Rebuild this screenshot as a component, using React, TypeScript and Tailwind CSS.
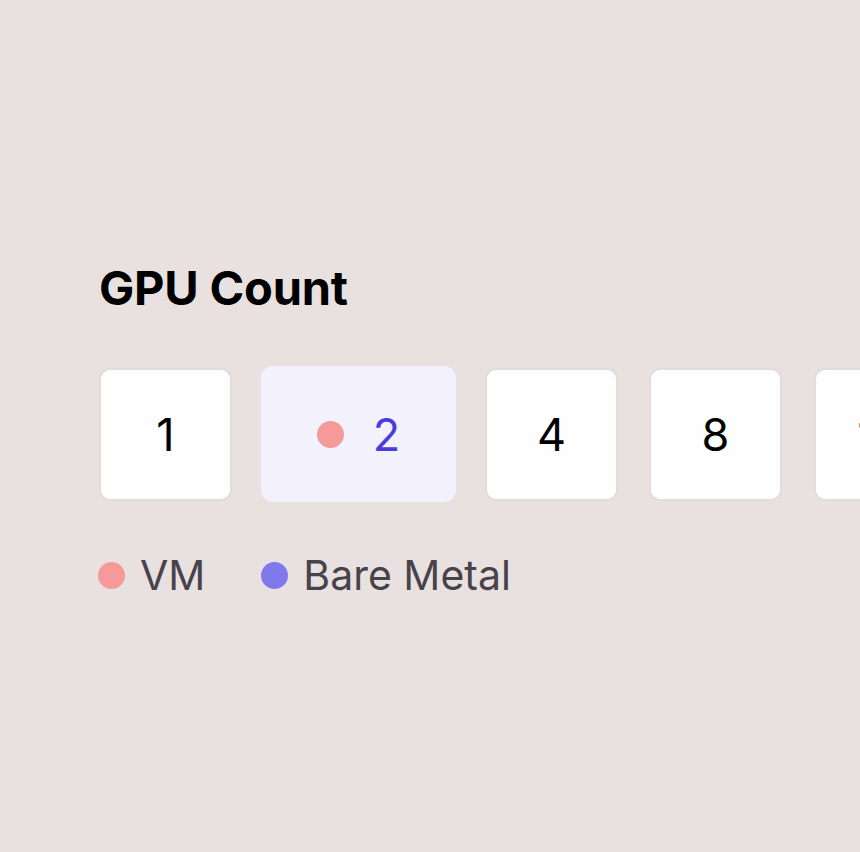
import React from "react"

const counts = [
    { value: "1", selected: false, gap: "" },
    { value: "2", selected: true, gap: "ml-[29px]" },
    { value: "4", selected: false, gap: "ml-[29px]" },
    { value: "8", selected: false, gap: "ml-[31px]" },
    { value: "16", selected: false, gap: "ml-[32px]" },
]

const font = { fontFamily: "Inter, 'Liberation Sans', sans-serif" }

export default function App() {
    return (
        <div className="w-[860px] h-[852px] overflow-hidden bg-[#e8e1e0]" style={font}>
            <div className="pt-[262px] pl-[99px]">
                <h2 className="text-[47px] leading-[52px] font-bold text-black tracking-[-0.2px]">GPU Count</h2>

                <div className="mt-[52px] flex items-center w-[900px]">
                    {counts.map((c) =>
                        c.selected ? (
                            <div
                                key={c.value}
                                className={`${c.gap} w-[195px] h-[136px] shrink-0 rounded-[12px] bg-[#f3f1fb] flex items-center justify-center gap-[29px]`}
                            >
                                <span className="w-[27px] h-[27px] rounded-full bg-[#f59a98]" />
                                <span className="text-[45px] leading-none text-[#4a3ddc]">{c.value}</span>
                            </div>
                        ) : (
                            <div
                                key={c.value}
                                className={`${c.gap} w-[133px] h-[133px] shrink-0 rounded-[11px] bg-[#fefefe] border-2 border-[#e2dcde] flex items-center justify-center`}
                            >
                                <span className="text-[45px] leading-none text-black">{c.value}</span>
                            </div>
                        )
                    )}
                </div>

                <div className="mt-[53px] flex items-center -ml-[1px]">
                    <span className="w-[27px] h-[27px] rounded-full bg-[#f59a98]" />
                    <span className="ml-[15px] text-[41px] leading-none text-[#48434a]">VM</span>
                    <span className="ml-[56px] w-[27px] h-[27px] rounded-full bg-[#8079ec]" />
                    <span className="ml-[15px] text-[41px] leading-none text-[#48434a]">Bare Metal</span>
                </div>
            </div>
        </div>
    )
}
